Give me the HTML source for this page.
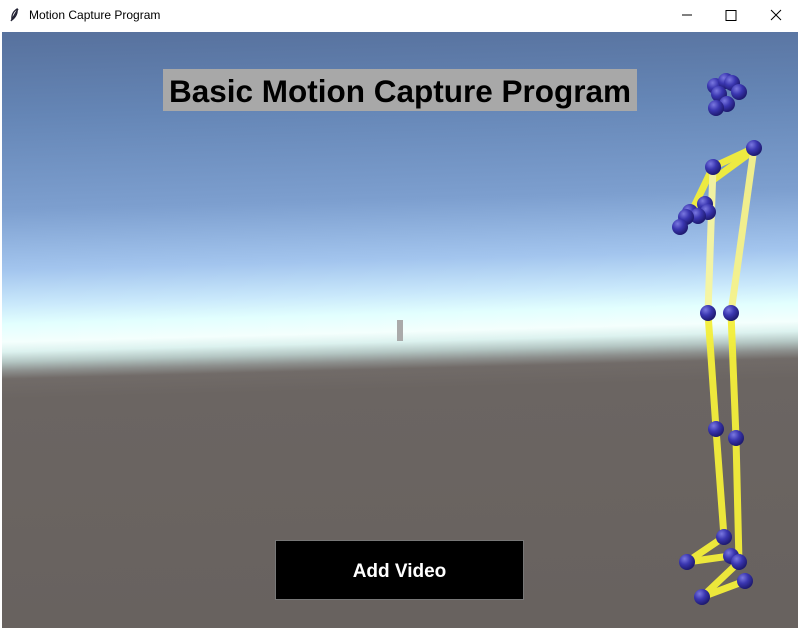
<!DOCTYPE html>
<html><head><style>
html,body{margin:0;padding:0;width:800px;height:631px;overflow:hidden;background:#fff;font-family:"Liberation Sans",sans-serif}
.tb{position:absolute;left:0;top:0;width:800px;height:31px;background:#fff}
.tb .t{position:absolute;left:29px;top:8px;font-size:12px;color:#000}
.view{position:absolute;left:2px;top:32px;width:796px;height:596px;overflow:hidden;
background:linear-gradient(178.5deg,#57719d 0px,#6586b6 85px,#7d9fcf 178px,#a3c5ee 238px,#c9e8fb 272px,#e2fffe 292px,#f4fffd 310px,#dcf2ef 320px,#b4c6c3 330px,#8d908e 339px,#716b68 347px,#6b6562 367px,#68625f 596px)}
.title{position:absolute;left:163px;top:69px;width:474px;height:42px;background:#a8a8a8;font-weight:bold;font-size:31.5px;line-height:44px;text-align:center;color:#000;white-space:nowrap}
.btn{position:absolute;left:275px;top:540px;width:247px;height:58px;background:#000;border:1px solid #777;color:#fff;font-weight:bold;font-size:19px;line-height:61px;text-align:center}
.cur{position:absolute;left:397px;top:320px;width:6px;height:21px;background:#aaa}
</style></head><body>
<div class="tb"><svg style="position:absolute;left:8px;top:7px" width="12" height="16"><path d="M3 14 L10 2 M4 13 Q3 6 9 2 Q10 8 4 13" stroke="#223" fill="none" stroke-width="1.3"/></svg><span class="t">Motion Capture Program</span>
<svg style="position:absolute;left:680px;top:8px" width="110" height="14"><path d="M2 7 H12" stroke="#000"/><path d="M46 2.5 H56 V12.5 H46 Z" stroke="#000" fill="none"/><path d="M91 2 L101 12 M101 2 L91 12" stroke="#000"/></svg></div>
<div class="view"></div>
<div class="title">Basic Motion Capture Program</div>
<div class="cur"></div>
<div class="btn">Add Video</div>
<svg style="position:absolute;left:0;top:0" width="800" height="631">
<defs>
<radialGradient id="s" cx="0.35" cy="0.3" r="0.7"><stop offset="0" stop-color="#7a78e0"/><stop offset="0.5" stop-color="#3a36b0"/><stop offset="1" stop-color="#1e1a70"/></radialGradient>
</defs>
<g stroke="#f4ef3a" stroke-width="7" stroke-linecap="round" opacity="0.95">
<line x1="713" y1="167" x2="754" y2="148"/><line x1="713" y1="180" x2="754" y2="150"/>
<line x1="713" y1="167" x2="690" y2="215"/>
<line x1="713" y1="167" x2="708" y2="313" stroke="#f7f6a0"/>
<line x1="754" y1="148" x2="731" y2="313" stroke="#f6f28a"/>
<line x1="708" y1="313" x2="716" y2="429"/><line x1="731" y1="313" x2="736" y2="438"/>
<line x1="716" y1="429" x2="724" y2="537"/><line x1="736" y1="438" x2="739" y2="562"/>
<line x1="724" y1="537" x2="687" y2="562"/><line x1="730" y1="556" x2="687" y2="562"/>
<line x1="739" y1="562" x2="702" y2="597"/><line x1="745" y1="581" x2="702" y2="597"/>
</g>
<g fill="url(#s)">
<circle cx="715" cy="86" r="8"/><circle cx="726" cy="81" r="8"/><circle cx="732" cy="83" r="8"/><circle cx="739" cy="92" r="8"/><circle cx="719" cy="94" r="8"/><circle cx="727" cy="104" r="8"/><circle cx="716" cy="108" r="8"/>
<circle cx="713" cy="167" r="8"/><circle cx="754" cy="148" r="8"/>
<circle cx="690" cy="212" r="8"/><circle cx="705" cy="204" r="8"/><circle cx="708" cy="212" r="8"/><circle cx="698" cy="216" r="8"/><circle cx="686" cy="217" r="8"/><circle cx="680" cy="227" r="8"/>
<circle cx="708" cy="313" r="8"/><circle cx="731" cy="313" r="8"/>
<circle cx="716" cy="429" r="8"/><circle cx="736" cy="438" r="8"/>
<circle cx="724" cy="537" r="8"/><circle cx="731" cy="556" r="8"/><circle cx="739" cy="562" r="8"/><circle cx="745" cy="581" r="8"/>
<circle cx="687" cy="562" r="8"/><circle cx="702" cy="597" r="8"/>
</g>
</svg>
</body></html>
